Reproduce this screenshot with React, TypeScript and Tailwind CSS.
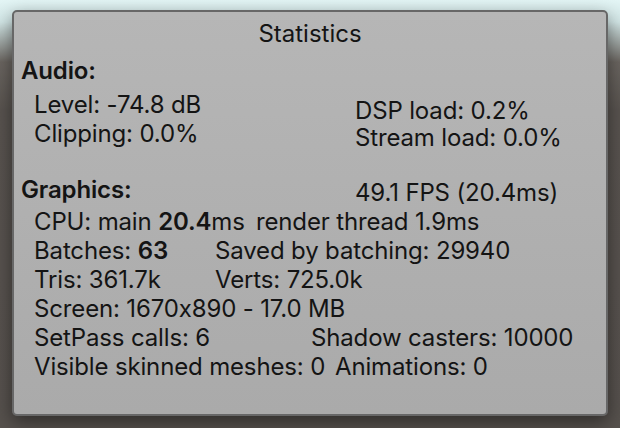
export default function App() {
  return (
    <div
      className="w-[620px] h-[428px] overflow-hidden pt-[10px] px-[12px] bg-[linear-gradient(to_bottom,#e3f5f5_0px,#d2e6e6_22px,#6a6560_62px,#58534f_110px,#56514d_100%)]"
      style={{ fontFamily: 'Inter, "Noto Sans", sans-serif', fontFeatureSettings: '"calt" 0' }}
    >
      <div className="h-[406px] rounded-[5px] border-2 border-[#676767] bg-[linear-gradient(to_bottom,#b6b6b6,#aaaaaa)] shadow-[0_6px_18px_rgba(0,0,0,0.45)] text-[24px] leading-[29px] tracking-[-0.15px] text-[#141414]">
        {/* Title */}
        <div className="pt-[7px] text-center tracking-normal">Statistics</div>

        {/* Audio */}
        <div className="mt-[8px] pl-[7px] font-semibold">Audio:</div>
        <div className="flex mt-[5px]">
          <div className="w-[341px] pl-[20px]">
            <div>Level: -74.8 dB</div>
            <div>Clipping: 0.0%</div>
          </div>
          <div className="pt-[7px] leading-[27px]">
            <div>DSP load: 0.2%</div>
            <div>Stream load: 0.0%</div>
          </div>
        </div>

        {/* Graphics */}
        <div className="flex mt-[24px]">
          <div className="w-[341px] pl-[7px] font-semibold">Graphics:</div>
          <div className="relative top-[3px]">49.1 FPS (20.4ms)</div>
        </div>
        <div className="pl-[20px] mt-[3px]">
          <div className="flex">
            <span className="w-[222px]">
              CPU: main <span className="font-semibold">20.4</span>ms
            </span>
            <span>render thread 1.9ms</span>
          </div>
          <div className="flex">
            <span className="w-[181px]">
              Batches: <span className="font-semibold">63</span>
            </span>
            <span>Saved by batching: 29940</span>
          </div>
          <div className="flex">
            <span className="w-[181px]">Tris: 361.7k</span>
            <span>Verts: 725.0k</span>
          </div>
          <div>Screen: 1670x890 - 17.0 MB</div>
          <div className="flex">
            <span className="w-[277px]">SetPass calls: 6</span>
            <span>Shadow casters: 10000</span>
          </div>
          <div className="flex">
            <span className="w-[301px]">Visible skinned meshes: 0</span>
            <span>Animations: 0</span>
          </div>
        </div>
      </div>
    </div>
  );
}
